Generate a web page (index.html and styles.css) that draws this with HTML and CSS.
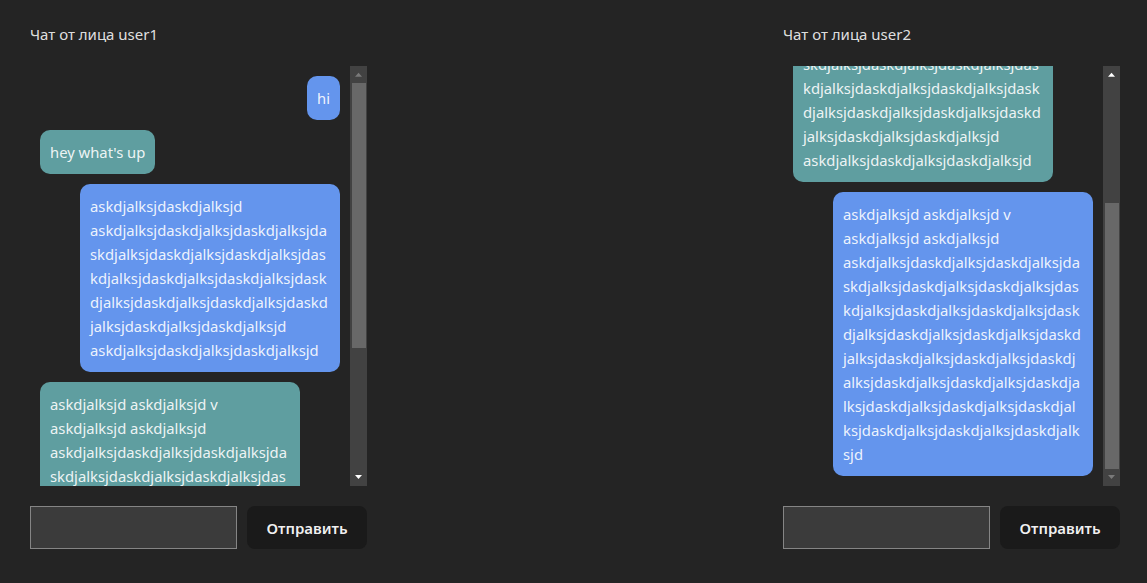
FILE: index.html
```html
<!DOCTYPE html>
<html lang="ru">
<head>
<meta charset="utf-8">
<title>Chat</title>
<link rel="stylesheet" href="styles.css">
</head>
<body>
<div class="app">
  <section class="chat">
    <div class="chat-title">Чат от лица user1</div>
    <div class="messages-frame">
      <div class="messages">
        <div class="messages-inner">
          <div class="msg msg-own">hi</div>
          <div class="msg msg-other">hey what's up</div>
          <div class="msg msg-own">askdjalksjdaskdjalksjd askdjalksjdaskdjalksjdaskdjalksjdaskdjalksjdaskdjalksjdaskdjalksjdaskdjalksjdaskdjalksjdaskdjalksjdaskdjalksjdaskdjalksjdaskdjalksjdaskdjalksjdaskdjalksjdaskdjalksjd askdjalksjdaskdjalksjdaskdjalksjd</div>
          <div class="msg msg-other">askdjalksjd askdjalksjd v askdjalksjd askdjalksjd askdjalksjdaskdjalksjdaskdjalksjdaskdjalksjdaskdjalksjdaskdjalksjdaskdjalksjdaskdjalksjdaskdjalksjdaskdjalksjdaskdjalksjdaskdjalksjdaskdjalksjdaskdjalksjdaskdjalksjdaskdjalksjdaskdjalksjdaskdjalksjdaskdjalksjdaskdjalksjdaskdjalksjdaskdjalksjdaskdjalksjdaskdjalksjdaskdjalksjd</div>
        </div>
      </div>
      <div class="scrollbar" aria-hidden="true">
        <div class="sb-btn sb-up is-disabled">
          <svg width="17" height="17" viewBox="0 0 17 17"><path d="M5 10.7 L8.5 6.7 L12 10.7 Z"/></svg>
        </div>
        <div class="sb-track">
          <div class="sb-thumb" style="margin-top:0px;height:265px"></div>
        </div>
        <div class="sb-btn sb-down">
          <svg width="17" height="17" viewBox="0 0 17 17"><path d="M5 6 L12 6 L8.5 10 Z"/></svg>
        </div>
      </div>
    </div>
    <form class="composer">
      <input class="composer-input" type="text">
      <button class="composer-send" type="button">Отправить</button>
    </form>
  </section>

  <section class="chat">
    <div class="chat-title">Чат от лица user2</div>
    <div class="messages-frame">
      <div class="messages messages-bottom">
        <div class="messages-inner">
          <div class="msg msg-other">hi</div>
          <div class="msg msg-own">hey what's up</div>
          <div class="msg msg-other">askdjalksjdaskdjalksjd askdjalksjdaskdjalksjdaskdjalksjdaskdjalksjdaskdjalksjdaskdjalksjdaskdjalksjdaskdjalksjdaskdjalksjdaskdjalksjdaskdjalksjdaskdjalksjdaskdjalksjdaskdjalksjdaskdjalksjd askdjalksjdaskdjalksjdaskdjalksjd</div>
          <div class="msg msg-own">askdjalksjd askdjalksjd v askdjalksjd askdjalksjd askdjalksjdaskdjalksjdaskdjalksjdaskdjalksjdaskdjalksjdaskdjalksjdaskdjalksjdaskdjalksjdaskdjalksjdaskdjalksjdaskdjalksjdaskdjalksjdaskdjalksjdaskdjalksjdaskdjalksjdaskdjalksjdaskdjalksjdaskdjalksjdaskdjalksjdaskdjalksjdaskdjalksjdaskdjalksjdaskdjalksjdaskdjalksjdaskdjalksjd</div>
        </div>
      </div>
      <div class="scrollbar" aria-hidden="true">
        <div class="sb-btn sb-up">
          <svg width="17" height="17" viewBox="0 0 17 17"><path d="M5 10.7 L8.5 6.7 L12 10.7 Z"/></svg>
        </div>
        <div class="sb-track">
          <div class="sb-thumb" style="margin-top:120px;height:266px"></div>
        </div>
        <div class="sb-btn sb-down is-disabled">
          <svg width="17" height="17" viewBox="0 0 17 17"><path d="M5 6 L12 6 L8.5 10 Z"/></svg>
        </div>
      </div>
    </div>
    <form class="composer">
      <input class="composer-input" type="text">
      <button class="composer-send" type="button">Отправить</button>
    </form>
  </section>
</div>
</body>
</html>
```

FILE: styles.css
```css
html, body {
  margin: 0;
  padding: 0;
  background: #242424;
}

body {
  font-family: "Noto Sans", "Open Sans", sans-serif;
  color: rgba(255, 255, 255, 0.87);
}

.app {
  display: flex;
  justify-content: space-between;
  padding: 24px 27px 0 30px;
}

.chat {
  width: 337px;
  display: flex;
  flex-direction: column;
}

.chat-title {
  font-size: 15px;
  line-height: 20px;
  height: 20px;
}

.messages-frame {
  margin-top: 22px;
  height: 420px;
  display: flex;
}

.messages {
  flex: 1;
  min-width: 0;
  overflow-y: scroll;
  scrollbar-width: none;
  display: flex;
  flex-direction: column;
}

.messages::-webkit-scrollbar {
  display: none;
}

.messages-bottom {
  flex-direction: column-reverse;
}

.messages-inner {
  display: flex;
  flex-direction: column;
  gap: 10px;
  padding: 10px;
  flex-shrink: 0;
}

.msg {
  box-sizing: border-box;
  max-width: 260px;
  padding: 10px;
  border-radius: 10px;
  font-size: 14.8px;
  line-height: 24px;
  overflow-wrap: anywhere;
  color: rgba(255, 255, 255, 0.9);
}

.msg-own {
  align-self: flex-end;
  background: #6495ed;
}

.msg-other {
  align-self: flex-start;
  background: #5f9ea0;
}

.scrollbar {
  width: 17px;
  flex-shrink: 0;
  background: #424242;
  display: flex;
  flex-direction: column;
}

.sb-btn {
  height: 17px;
  flex-shrink: 0;
}

.sb-btn svg {
  display: block;
  fill: #ffffff;
}

.sb-btn.is-disabled svg {
  fill: #7a7a7a;
}

.sb-track {
  flex: 1;
  display: flex;
  flex-direction: column;
}

.sb-thumb {
  margin-left: 2px;
  margin-right: 1px;
  background: #686868;
  flex-shrink: 0;
}

.composer {
  margin: 20px 0 0 0;
  display: flex;
  gap: 10px;
  align-items: flex-start;
}

.composer-input {
  box-sizing: border-box;
  width: 207px;
  height: 43px;
  margin: 0;
  background: #3b3b3b;
  border: 1px solid #858585;
  color: #fff;
  font-family: inherit;
  font-size: 15px;
  padding: 0 6px;
  outline: none;
}

.composer-send {
  box-sizing: border-box;
  width: 120px;
  height: 43px;
  margin: 0;
  border: 1px solid transparent;
  border-radius: 8px;
  background: #1a1a1a;
  color: rgba(255, 255, 255, 0.95);
  font-family: inherit;
  font-size: 15px;
  font-weight: 600;
  cursor: pointer;
}
```
